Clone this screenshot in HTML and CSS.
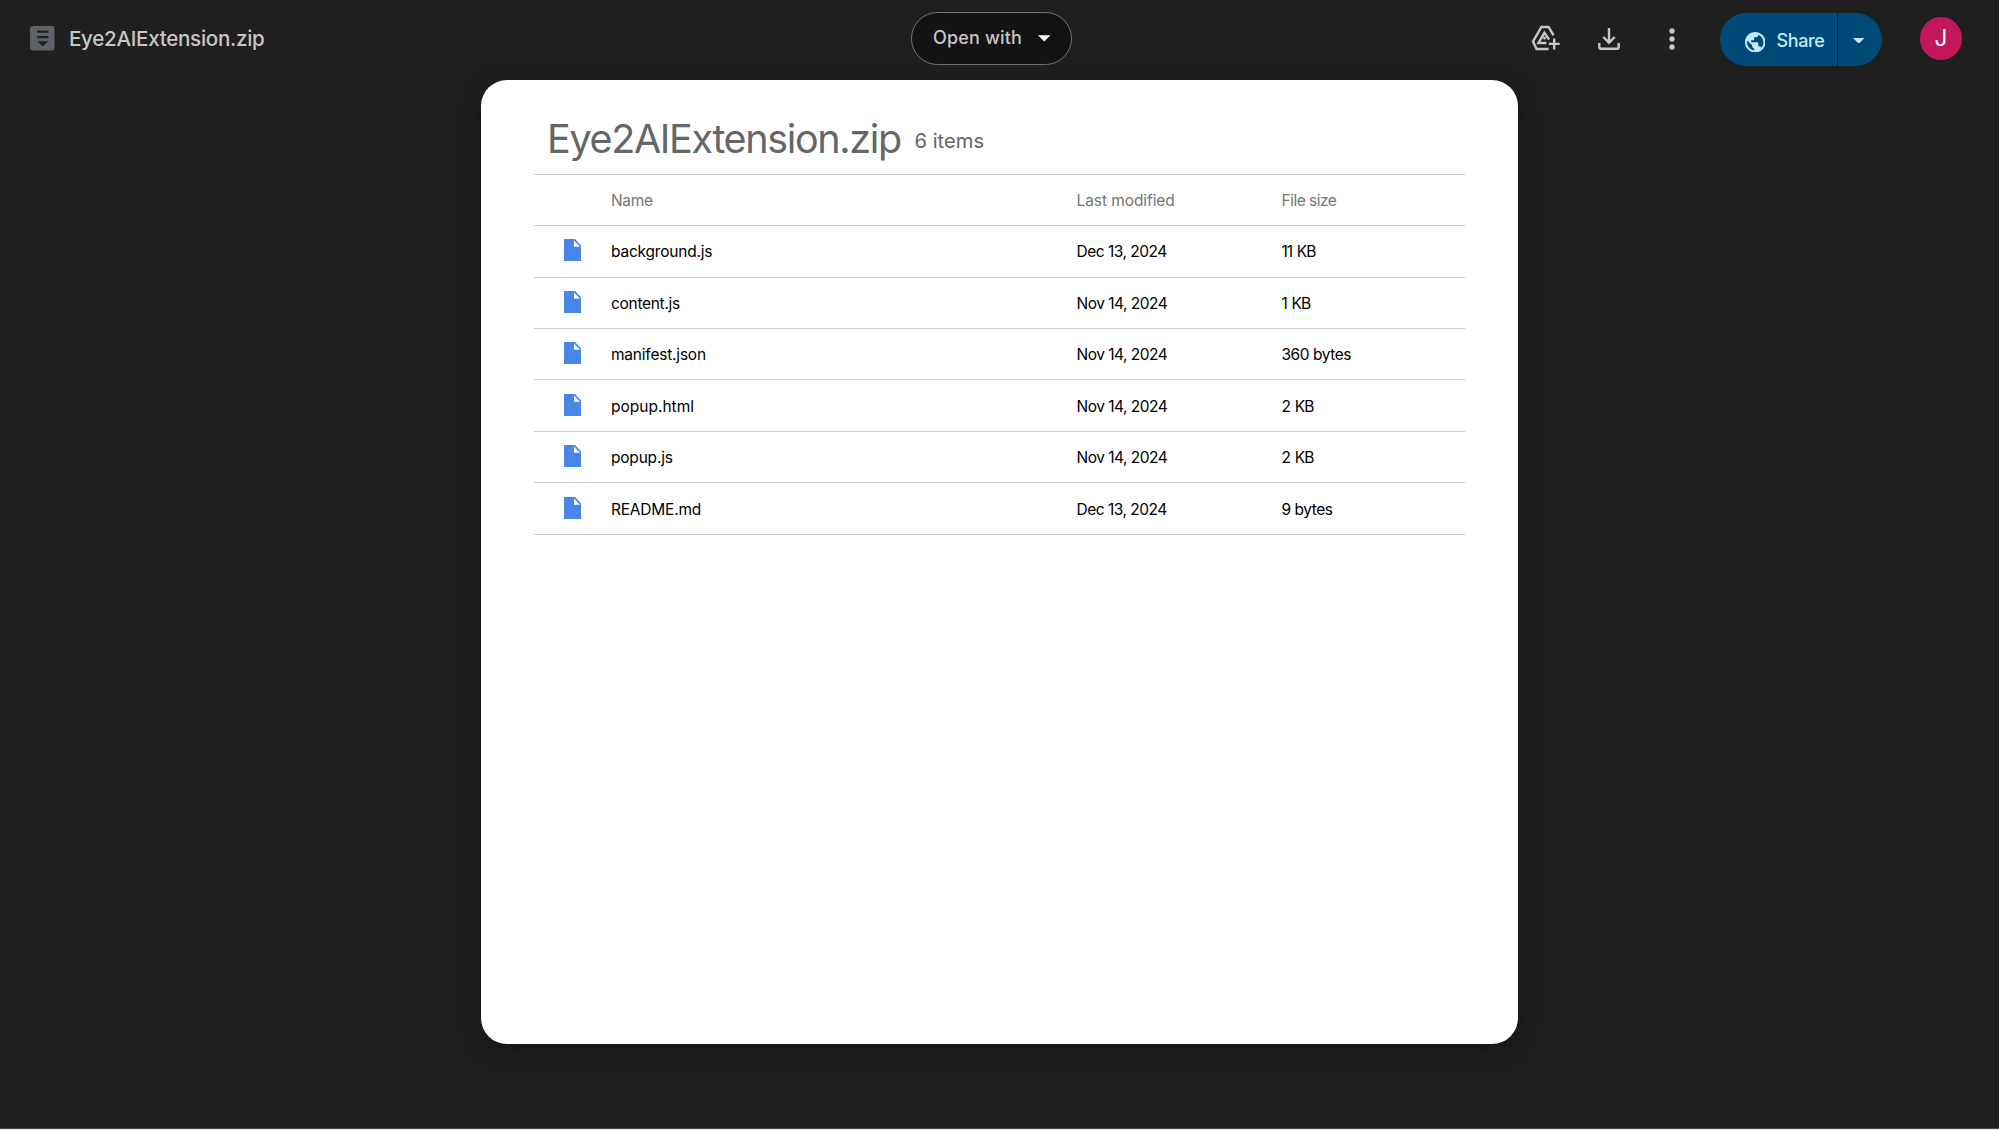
FILE: index.html
```html
<!DOCTYPE html>
<html lang="en">
<head>
<meta charset="utf-8">
<title>Eye2AIExtension.zip</title>
<link rel="stylesheet" href="styles.css">
</head>
<body>
<div class="viewer">
  <header class="toolbar">
    <div class="file">
      <svg class="zip-icon" viewBox="0 0 24 24"><rect width="24" height="24" rx="3" fill="#5f6368"/><path d="M7 4.3h11v2.4H7zM7 9.7h11v2.4H7zM7.2 15h10.6l-5.3 5z" fill="#1f1f1f"/></svg>
      <span class="file-name">Eye2AIExtension.zip</span>
    </div>
    <button class="open-with"><span>Open with</span>
      <svg class="caret" viewBox="0 0 12 6"><path d="M0 0h12L6 6z" fill="#fff"/></svg>
    </button>
    <div class="actions">
      <svg class="icon-drive" viewBox="0 0 30 26" fill="none" stroke="#c7c7c7" stroke-width="2.4"><path d="M22.5 10.4 17.6 2H10.4L2 16.6 5.6 24H17.6"/><path d="M18.2 14.6 13.4 7.8 7.4 18H15.4M13.5 11.8V14.5"/><path d="M23.2 13.4v11M17.8 18.9h10.9"/></svg>
      <svg class="icon-download" viewBox="0 0 22 22" fill="none" stroke="#c7c7c7" stroke-width="2.4"><path d="M11 0v14M5.3 9l5.7 5.7L16.7 9M1.3 15v4.5q0 1.2 1.2 1.2h17q1.2 0 1.2-1.2V15"/></svg>
      <svg class="icon-more" viewBox="0 0 6 22" fill="#c7c7c7"><circle cx="3" cy="3" r="2.7"/><circle cx="3" cy="11" r="2.7"/><circle cx="3" cy="19" r="2.7"/></svg>
      <div class="share">
        <button class="share-main">
          <svg class="globe" viewBox="2 2 20 20" fill="#c2e7ff"><path d="M12 2C6.48 2 2 6.48 2 12s4.48 10 10 10 10-4.48 10-10S17.52 2 12 2zM4 12c0-.61.08-1.21.21-1.78L8.99 15v1c0 1.1.9 2 2 2v1.93C7.06 19.43 4 16.07 4 12zm13.89 5.4c-.26-.81-1-1.4-1.9-1.4h-1v-3c0-.55-.45-1-1-1h-6v-2h2c.55 0 1-.45 1-1V7h2c1.1 0 2-.9 2-2v-.41C17.92 5.77 20 8.65 20 12c0 2.08-.81 3.98-2.11 5.4z"/></svg>
          <span>Share</span>
        </button>
        <button class="share-more"><svg class="share-caret" viewBox="0 0 12 6"><path d="M0 0h12L6 6z" fill="#c2e7ff"/></svg></button>
      </div>
      <div class="avatar">J</div>
    </div>
  </header>

  <main class="card">
    <div class="title-row">
      <h1>Eye2AIExtension.zip</h1>
      <span class="count">6 items</span>
    </div>
    <div class="table">
      <div class="row head"><span></span><span class="h-name">Name</span><span class="h-date">Last modified</span><span class="h-size">File size</span></div>
      <div class="row"><svg class="doc" viewBox="0 0 17 22"><path d="M0 0h11l6 6.5V22H0z" fill="#4a86e8"/><path d="M10 1.4v6.3h6z" fill="#fff"/></svg><span class="name">background.js</span><span class="date">Dec 13, 2024</span><span class="kb">11 KB</span></div>
      <div class="row"><svg class="doc" viewBox="0 0 17 22"><path d="M0 0h11l6 6.5V22H0z" fill="#4a86e8"/><path d="M10 1.4v6.3h6z" fill="#fff"/></svg><span class="name tight">content.js</span><span class="date">Nov 14, 2024</span><span class="kb">1 KB</span></div>
      <div class="row"><svg class="doc" viewBox="0 0 17 22"><path d="M0 0h11l6 6.5V22H0z" fill="#4a86e8"/><path d="M10 1.4v6.3h6z" fill="#fff"/></svg><span class="name">manifest.json</span><span class="date">Nov 14, 2024</span><span class="bytes">360 bytes</span></div>
      <div class="row"><svg class="doc" viewBox="0 0 17 22"><path d="M0 0h11l6 6.5V22H0z" fill="#4a86e8"/><path d="M10 1.4v6.3h6z" fill="#fff"/></svg><span class="name loose">popup.html</span><span class="date">Nov 14, 2024</span><span class="kb">2 KB</span></div>
      <div class="row"><svg class="doc" viewBox="0 0 17 22"><path d="M0 0h11l6 6.5V22H0z" fill="#4a86e8"/><path d="M10 1.4v6.3h6z" fill="#fff"/></svg><span class="name">popup.js</span><span class="date">Nov 14, 2024</span><span class="kb">2 KB</span></div>
      <div class="row"><svg class="doc" viewBox="0 0 17 22"><path d="M0 0h11l6 6.5V22H0z" fill="#4a86e8"/><path d="M10 1.4v6.3h6z" fill="#fff"/></svg><span class="name">README.md</span><span class="date">Dec 13, 2024</span><span class="bytes">9 bytes</span></div>
    </div>
  </main>
</div>
</body>
</html>
```
FILE: styles.css
```css
* { box-sizing: border-box; }
body {
  margin: 0;
  background: #e6dfe2;
  font-family: Inter, "Liberation Sans", sans-serif;
}
button { font: inherit; border: 0; padding: 0; margin: 0; background: none; color: inherit; }
svg { display: block; flex: none; }
span { white-space: nowrap; }

.viewer {
  height: 1129px;
  overflow: hidden;
  background: #1f1f1f;
  border-bottom: 1px solid #4a4648;
}

/* toolbar */
.toolbar {
  height: 80px;
  display: grid;
  grid-template-columns: 911px 161px 1fr;
  align-items: start;
}
.file { display: flex; align-items: center; height: 77px; padding-left: 30px; gap: 14.5px; }
.zip-icon { width: 24.5px; height: 24.5px; }
.file-name { font-size: 20.6px; font-weight: 550; letter-spacing: -0.3px; color: #c7c7c7; }
.open-with {
  display: flex;
  align-items: center;
  justify-content: space-between;
  height: 53px;
  margin-top: 12px;
  padding: 0 21px;
  background: #131314;
  border: 1.3px solid #757575;
  border-radius: 27px;
  color: #c7c7c7;
  font-size: 18px;
  font-weight: 550;
  letter-spacing: 0.15px;
}
.open-with span { margin-top: -2px; }
.caret { width: 12.5px; height: 6.5px; }

.actions { display: flex; align-items: center; height: 77px; padding-left: 458.5px; }
.icon-drive { width: 30px; height: 26px; margin-top: -2px; }
.icon-download { width: 22px; height: 22px; margin-left: 37.5px; }
.icon-more { width: 6px; height: 22px; margin-left: 49px; }
.share { display: flex; gap: 1.5px; height: 53px; margin: 2px 0 0 45px; color: #c2e7ff; }
.share-main {
  display: flex;
  align-items: center;
  width: 116.5px;
  padding-left: 24.5px;
  gap: 11.5px;
  background: #004a77;
  border-radius: 27px 0 0 27px;
  font-size: 18px;
  font-weight: 550;
  letter-spacing: -0.4px;
}
.share-main span { margin-top: 2px; }
.globe { width: 20.5px; height: 20.5px; margin-top: 5px; }
.share-more {
  display: flex;
  align-items: center;
  width: 43.5px;
  padding-left: 15px;
  background: #004a77;
  border-radius: 0 27px 27px 0;
}
.share-caret { width: 11.5px; height: 5.8px; margin-top: 2px; }
.avatar {
  width: 42.4px;
  height: 42.4px;
  margin-left: 38.3px;
  border-radius: 50%;
  background: #c2185b;
  color: #fff;
  font-size: 22.5px;
  line-height: 42.4px;
  text-align: center;
}

/* archive listing */
.card {
  width: 1037px;
  height: 964px;
  margin-left: 481px;
  padding: 0 53px;
  background: #fff;
  border-radius: 26px;
  box-shadow: 0 5px 22px rgba(0, 0, 0, 0.35);
}
.title-row { display: flex; align-items: center; height: 93.6px; padding-left: 13px; color: #666; }
h1 { margin: 25px 0 0; font-size: 39.5px; font-weight: 400; letter-spacing: -1.35px; line-height: 46px; }
.count { margin: 27px 0 0 13.5px; font-size: 20.2px; letter-spacing: 0.04px; }
.table { border-top: 1px solid #ccc; }
.row {
  display: grid;
  grid-template-columns: 77px 465.5px 205px 1fr;
  align-items: center;
  height: 51.48px;
  border-bottom: 1px solid #ccc;
  font-size: 15.5px;
  font-weight: 430;
  color: #000;
}
.row span { padding-top: 1px; }
.head { color: #757575; font-weight: 400; }
.doc { width: 17px; height: 22px; margin: -2px 0 0 30px; }
.h-name { letter-spacing: -0.32px; }
.h-date { letter-spacing: -0.08px; }
.h-size { letter-spacing: -0.5px; }
.name { letter-spacing: -0.21px; }
.tight { letter-spacing: -0.3px; }
.loose { letter-spacing: 0; }
.date { letter-spacing: -0.5px; }
.kb { letter-spacing: -1px; word-spacing: 1.4px; }
.bytes { letter-spacing: -0.46px; }
```
